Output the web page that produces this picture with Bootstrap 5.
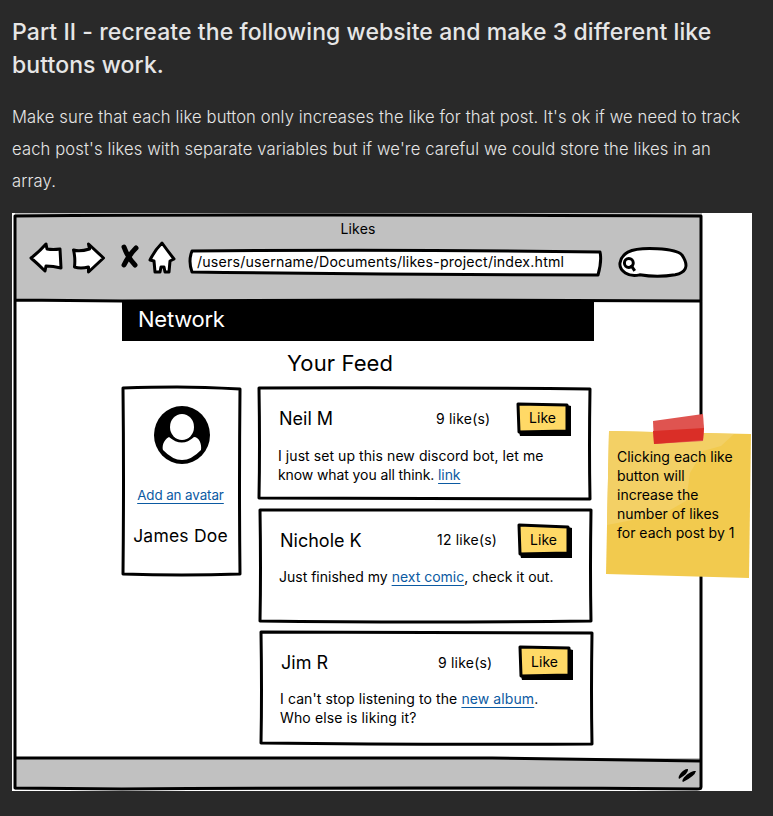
<!DOCTYPE html>
<html lang="en">
<head>
<meta charset="utf-8">
<meta name="viewport" content="width=device-width, initial-scale=1">
<title>Likes project</title>
<link href="https://cdn.jsdelivr.net/npm/bootstrap@5.3.0/dist/css/bootstrap.min.css" rel="stylesheet">
<style>
body{background:#292929;color:#e6e6e6;font-family:Inter,"Open Sans",sans-serif;min-height:816px;overflow:hidden}
.page{padding:16px 12px 0}
.page-title{font-size:23px;line-height:33px;font-weight:500;letter-spacing:.09px;margin-bottom:19px;white-space:nowrap}
.intro{font-size:16.6px;line-height:32px;font-weight:300;letter-spacing:.12px;margin-bottom:16px;white-space:nowrap}
.mock{width:740px;height:578px;background:#fff;color:#000;font-size:14px;line-height:19px;white-space:nowrap}
.browser{width:690px;height:578px}
.sketch{position:absolute;left:0;top:0;width:100%;height:100%;overflow:visible;pointer-events:none;fill:none;stroke:#000;stroke-width:3;stroke-linejoin:round;stroke-linecap:round}
.chrome{height:88px;background:#c1c1c1;margin-left:3px;padding-top:6px}
.cap{letter-spacing:.2px;margin-right:1px}
.tools{height:48px;padding-left:14px}
.tools svg,.avatar svg,.grip{display:block;overflow:visible}
.tools .ico{margin-bottom:9px}
.url{width:413px;height:26px;margin-left:14px;padding-left:8px;line-height:25px;font-size:14.2px;letter-spacing:.18px}
.search{width:69px;height:31px}
.content{height:457px}
.net{margin-left:110px;width:472px;height:40px;background:#000;color:#fff;font-size:22px;line-height:36px;padding-left:16px;letter-spacing:-.25px}
.feed-title{font-size:22px;line-height:30px;letter-spacing:.1px;margin:7px 0 9px 275px}
.cols{margin-left:110px}
.side{width:119px;height:188px;padding-top:19px}
.add{font-size:13.4px;letter-spacing:-.1px;margin:22px 2px 0 0}
.name{font-size:17.5px;line-height:24px;letter-spacing:.2px;margin:19px 2px 0 0}
.feed{margin-left:17px;gap:10.5px}
.post{width:333px;height:112px;padding:14px 19px 0 20px}
.post:nth-child(1){padding-top:15px}
.post:nth-child(1) .msg{margin-top:10px}
.post:nth-child(2){margin-left:1px}.post:nth-child(3){margin-left:2px}
.who{font-size:18px;line-height:34px;width:158px;padding-left:1px}
.count{width:80px;letter-spacing:.2px;padding-bottom:2px}
.like{width:55px;height:34px;border:0;background:none;color:#000;font-size:14px;line-height:31px;padding:0 2px 3px 0;letter-spacing:.1px}
.msg{margin-top:9px;line-height:19px}
.m1{letter-spacing:.07px}.m2{letter-spacing:-.1px}.m4{letter-spacing:.1px}.m5{letter-spacing:.12px}
.mock a{color:#0b5aa2;text-decoration:underline;text-underline-offset:3px;text-decoration-thickness:1px}
.status{height:32px;background:#c1c1c1;margin-left:3px;padding:10px 6px 0 0}
.note{left:594px;top:200px;width:146px;height:166px;padding:34px 0 0 11px}
.note .paper{position:absolute;left:0;top:0}
</style>
</head>
<body>
<main class="page">
<h1 class="page-title">Part II - recreate the following website and make 3 different like<br>buttons work.</h1>
<p class="intro">Make sure that each like button only increases the like for that post. It's ok if we need to track<br>each post's likes with separate variables but if we're careful we could store the likes in an<br>array.</p>
<section class="mock position-relative">
 <div class="browser d-flex flex-column position-relative">
  <header class="chrome">
   <div class="text-center"><span class="cap">Likes</span></div>
   <div class="tools d-flex align-items-center">
    <svg class="ico" width="33" height="32" viewBox="0 0 33 32" fill="#fff" stroke="#000" stroke-width="3" stroke-linejoin="round"><path d="M2 16Q10 10 17 2L18 7Q24 8 31 7L32 26Q24 24 17 24L16 29Q9 22 2 16Z"/></svg>
    <svg class="ico ms-2" width="35" height="32" viewBox="0 0 34 32" fill="#fff" stroke="#000" stroke-width="3" stroke-linejoin="round"><path d="M3 8Q9 10 19 7L18 2 33 16 18 30 18 25Q10 27 4 25Q5 16 3 8Z"/></svg>
    <svg class="ico ms-3" width="19" height="26" viewBox="0 0 19 26" stroke="#000" stroke-width="5" stroke-linecap="round"><path d="M3 2Q7 13 14 20M15 3Q8 10 3 20" fill="none"/></svg>
    <svg class="ico ms-2" width="27" height="33" viewBox="0 0 27 33" fill="#fff" stroke="#000" stroke-width="3" stroke-linejoin="round"><path d="M14 2Q19 9 26 18L22 20 21 31 17 31 16 26 13 26 12 31 7 31 6 20 2 19Q7 9 14 2Z"/></svg>
    <div class="url position-relative"><svg class="sketch" viewBox="0 0 414 26" preserveAspectRatio="none"><path fill="#fff" d="M3 2Q210 0 412 3Q414 12 410 26Q210 26 3 23Q-1 12 3 2Z"/></svg><span class="position-relative">/users/username/Documents/likes-project/index.html</span></div>
    <svg class="search ms-3" viewBox="0 0 70 31" fill="#fff" stroke="#000" stroke-width="3"><path d="M10 5C22-1 59 1 65 8C73 20 68 26 58 28Q40 31 22 28C11 31 1 24 2 16Q3 9 10 5Z"/><circle cx="11" cy="16" r="4.5"/><path d="m13 18 4 6"/></svg>
   </div>
  </header>
  <div class="content">
   <div class="net">Network</div>
   <h2 class="feed-title fw-normal">Your Feed</h2>
   <div class="cols d-flex">
    <aside class="side position-relative d-flex flex-column align-items-center">
     <svg class="sketch" viewBox="0 0 119 188"><path d="M1 1Q30 0 55 0T118 2Q117 100 118 187Q60 189 1 187Q2 90 1 1Z"/></svg>
     <div class="avatar"><svg width="56" height="58" viewBox="0 0 56 58"><ellipse cx="28" cy="29" rx="28" ry="29"/><ellipse cx="28" cy="21" rx="12" ry="13" fill="#fff"/><path fill="#fff" d="M15 31C9 34 8 41 9 44Q28 64 47 44C48 38 45 31 40 31Q28 42 15 31Z"/></svg></div>
     <a class="add" href="#">Add an avatar</a>
     <div class="name">James Doe</div>
    </aside>
    <div class="feed d-flex flex-column">
     <article class="post position-relative"><svg class="sketch" viewBox="0 0 333 112"><path d="M1 1Q160 0 332 2Q331 60 332 112Q160 111 1 111Q2 60 1 1Z"/></svg>
      <div class="d-flex align-items-center"><div class="who">Neil M</div><div class="count">9 like(s)</div><button class="like position-relative" type="button"><svg class="sketch" viewBox="0 0 55 34"><path stroke="none" fill="#000" d="M51 3 55 4 55 34 4 34 3 30 51 29Z"/><path fill="#ffd966" d="M2 2 51 3 51 29 3 30Z"/></svg><span class="position-relative">Like</span></button></div>
      <div class="msg"><span class="m1">I just set up this new discord bot, let me</span><br><span class="m2">know what you all think. <a href="#">link</a></span></div></article>
     <article class="post position-relative"><svg class="sketch" viewBox="0 0 333 112"><path d="M1 0Q160 0 332 0Q331 60 332 111Q160 113 1 111Q2 60 1 0Z"/></svg>
      <div class="d-flex align-items-center"><div class="who">Nichole K</div><div class="count">12 like(s)</div><button class="like position-relative" type="button"><svg class="sketch" viewBox="0 0 55 34"><path stroke="none" fill="#000" d="M51 3 55 4 55 34 4 34 3 30 51 29Z"/><path fill="#ffd966" d="M2 1 51 3 51 29 3 30Z"/></svg><span class="position-relative">Like</span></button></div>
      <div class="msg"><span class="m3">Just finished my <a href="#">next comic</a>, check it out.</span></div></article>
     <article class="post position-relative"><svg class="sketch" viewBox="0 0 333 112"><path d="M1 0Q160 1 332 1Q331 60 332 112Q160 113 1 111Q2 60 1 0Z"/></svg>
      <div class="d-flex align-items-center"><div class="who">Jim R</div><div class="count">9 like(s)</div><button class="like position-relative" type="button"><svg class="sketch" viewBox="0 0 55 34"><path stroke="none" fill="#000" d="M51 3 55 4 55 34 4 34 3 30 51 29Z"/><path fill="#ffd966" d="M2 1 51 2 51 29 3 30Z"/></svg><span class="position-relative">Like</span></button></div>
      <div class="msg"><span class="m4">I can't stop listening to the <a href="#">new album</a>.</span><br><span class="m5">Who else is liking it?</span></div></article>
    </div>
   </div>
  </div>
  <footer class="status d-flex justify-content-end"><svg class="grip" width="18" height="16" viewBox="0 0 18 16"><path d="M1 11C-1 8 6 0 10 1Q11 5 1 11ZM5 14C2 11 13 2 18 3Q17 8 5 14Z"/></svg></footer>
  <svg class="sketch" viewBox="0 0 690 578"><path d="M3 3Q300 1 689 3V574Q689 576 685 576Q400 574 110 576L3 575Q4 280 3 3ZM3 87 110 88 400 87 689 88M3 545Q360 544 480 545L689 548"/></svg>
 </div>
 <aside class="note position-absolute">
  <svg class="paper" width="146" height="166" viewBox="0 0 146 166"><path fill="#f2ca4e" d="M3 18 145 21 143 165 0 161Z"/><path fill="#f3d065" d="M3 18 128 21 115 33 97 38 84 60 80 88 57 101 1 112Z"/><path fill="#df5450" d="M47 8 97 1 98 15 97 28 48 31Z"/><path fill="#da2e27" d="M47 18 98 15 97 27 48 31Z"/></svg>
  <div class="position-relative">Clicking each like<br>button will<br>increase the<br>number of likes<br>for each post by 1</div>
 </aside>
</section>
</main>
<script src="https://cdn.jsdelivr.net/npm/bootstrap@5.3.0/dist/js/bootstrap.bundle.min.js"></script>
</body>
</html>
